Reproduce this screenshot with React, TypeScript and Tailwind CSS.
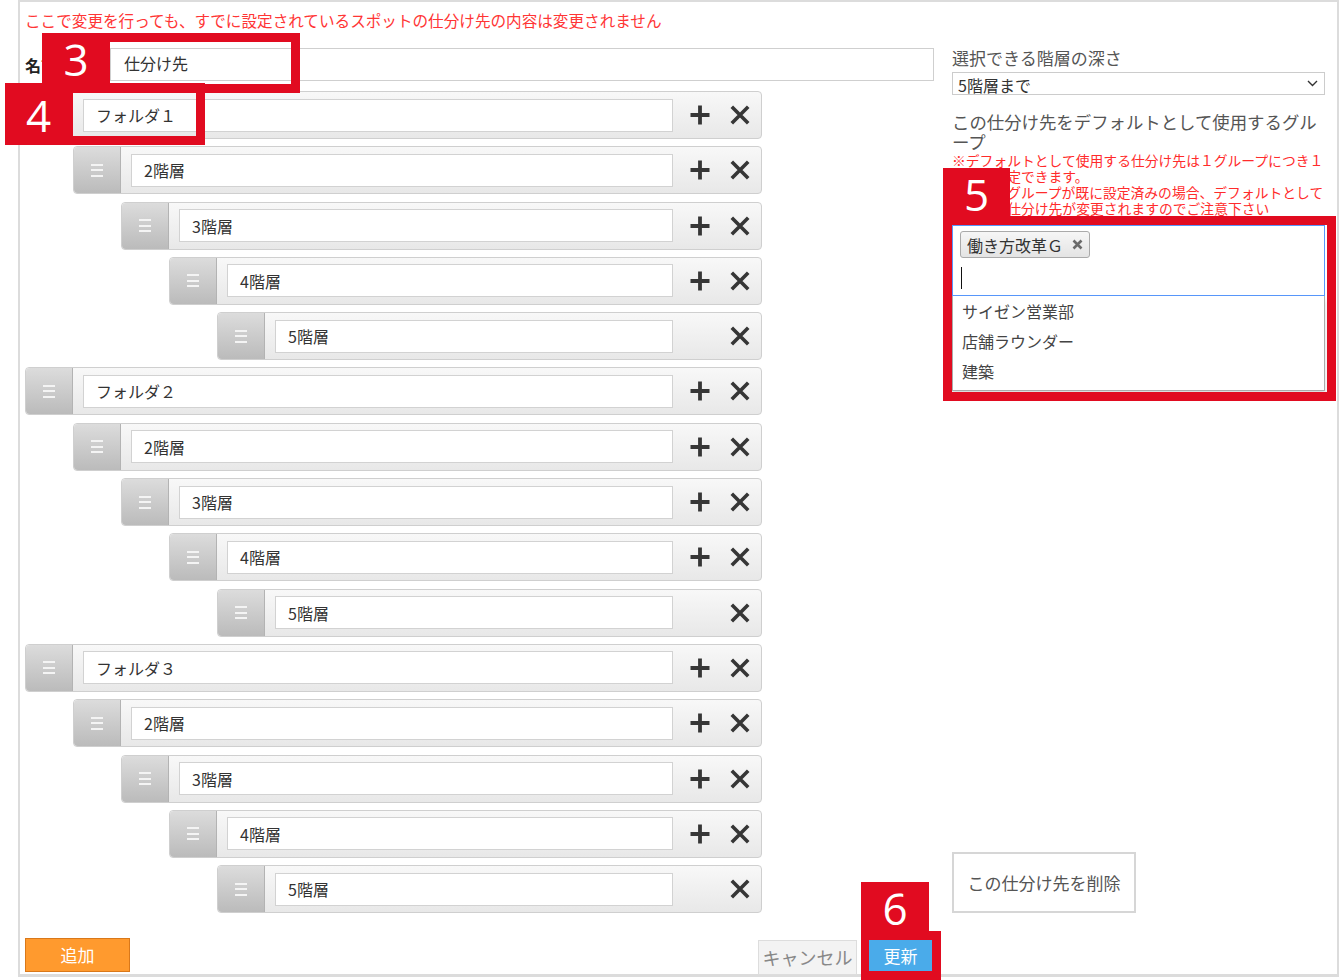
import React from "react";

type Row = { level: number; label: string };

const indent: Record<number, string> = {
  1: "ml-0",
  2: "ml-[48px]",
  3: "ml-[96px]",
  4: "ml-[144px]",
  5: "ml-[192px]",
};

const rows: Row[] = ["１", "２", "３"].flatMap((n) => [
  { level: 1, label: `フォルダ${n}` },
  { level: 2, label: "2階層" },
  { level: 3, label: "3階層" },
  { level: 4, label: "4階層" },
  { level: 5, label: "5階層" },
]);

const PlusIcon = () => (
  <svg width="22" height="22" viewBox="0 0 22 22">
    <path d="M11 1.5v19M1.5 11h19" stroke="#363636" strokeWidth="3.8" fill="none" />
  </svg>
);

const CrossIcon = () => (
  <svg width="20" height="20" viewBox="0 0 20 20">
    <path d="M1.8 1.8l16.4 16.4M18.2 1.8L1.8 18.2" stroke="#363636" strokeWidth="3.6" fill="none" />
  </svg>
);

const FolderRow: React.FC<Row> = ({ level, label }) => (
  <div
    className={`${indent[level]} flex h-[48px] rounded-[4px] border border-[#cfcfcf] bg-gradient-to-b from-[#f8f8f8] to-[#e8e8e8]`}
  >
    <div className="flex w-[47px] flex-col items-center justify-center gap-[3.5px] rounded-l-[4px] border-r border-[#b3b3b3] bg-gradient-to-b from-[#dcdcdc] to-[#bbbbbb]">
      <span className="h-[2px] w-[12px] bg-[#f4f4f4]" />
      <span className="h-[2px] w-[12px] bg-[#f4f4f4]" />
      <span className="h-[2px] w-[12px] bg-[#f4f4f4]" />
    </div>
    <div className="flex flex-1 items-center pl-[10px]">
      <div className="flex h-[33px] w-full items-center border border-[#d2d2d2] bg-white pl-[12px] text-[16px] text-[#333]">
        {label}
      </div>
    </div>
    <div className="flex w-[88px] items-center gap-[19px] pl-[16px]">
      <span className={level === 5 ? "invisible" : ""}>
        <PlusIcon />
      </span>
      <CrossIcon />
    </div>
  </div>
);

const Badge: React.FC<{ n: string; className: string }> = ({ n, className }) => (
  <div
    className={`absolute flex justify-center bg-[#e10b20] pt-[2px] font-['Open_Sans',sans-serif] text-[44px] leading-[48px] text-white ${className}`}
  >
    {n}
  </div>
);

export default function App() {
  return (
    <div className="relative h-[980px] w-[1340px] overflow-hidden bg-white font-['Noto_Sans_CJK_JP',sans-serif]">
      <div className="ml-[18px] h-[977px] w-[1321px] border-x-2 border-t-2 border-b-[3px] border-[#dcdcdc] px-[5px] pt-[8px]">
        <p className="h-[20px] text-[15.6px] leading-[20px] text-[#ff3535]">
          ここで変更を行っても、すでに設定されているスポットの仕分け先の内容は変更されません
        </p>

        <div className="mt-[18px] flex">
          {/* left: name + folders */}
          <div className="w-[909px]">
            <div className="flex h-[33px] items-center">
              <span className="w-[85px] text-[16px] font-bold text-[#222]">名前</span>
              <div className="flex h-full flex-1 items-center border border-[#cfcfcf] pb-[3px] pl-[13px] text-[16px] text-[#333]">
                仕分け先
              </div>
            </div>
            <div className="mt-[10px] flex w-[737px] flex-col gap-[7.3px]">
              {rows.map((r, i) => (
                <FolderRow key={i} level={r.level} label={r.label} />
              ))}
            </div>
          </div>

          {/* right: settings */}
          <div className="ml-[18px] flex w-[373px] flex-col">
            <p className="text-[17px] leading-[20px] text-[#555]">選択できる階層の深さ</p>
            <div className="mt-[4px] flex h-[23px] items-center justify-between border border-[#cccccc] pl-[5px] pr-[6px] text-[16px] text-[#333]">
              <span className="pt-[3px]">5階層まで</span>
              <svg width="11" height="7" viewBox="0 0 11 7">
                <path d="M1 1l4.5 4.5L10 1" stroke="#333" strokeWidth="1.4" fill="none" />
              </svg>
            </div>
            <p className="mt-[17px] text-[17.4px] leading-[20px] text-[#555]">
              この仕分け先をデフォルトとして使用するグループ
            </p>
            <div className="whitespace-nowrap text-[13.8px] leading-[16px] text-[#ff2b2b]">
              <p>※デフォルトとして使用する仕分け先は１グループにつき１</p>
              <p>つまで設定できます。</p>
              <p>なお他のグループが既に設定済みの場合、デフォルトとして</p>
              <p>設定した仕分け先が変更されますのでご注意下さい</p>
            </div>

            <div className="mt-[9px]">
              <div className="h-[71px] border border-[#5897fb] px-[7px] pt-[5px]">
                <div className="inline-flex h-[27px] items-center gap-[9px] rounded-[3px] border border-[#aaaaaa] bg-gradient-to-b from-[#f6f6f6] to-[#e4e4e4] pl-[6px] pr-[6px] text-[16px] text-[#333]">
                  働き方改革Ｇ
                  <svg width="11" height="11" viewBox="0 0 11 11">
                    <path d="M1.5 1.5l8 8M9.5 1.5l-8 8" stroke="#6a6a6a" strokeWidth="2.6" fill="none" />
                  </svg>
                </div>
                <div className="ml-[1px] mt-[9px] h-[22px] w-px bg-[#111]" />
              </div>
              <div className="border border-t-0 border-[#aaaaaa] pb-[4px] shadow-[0_4px_5px_rgba(0,0,0,0.15)]">
                <div className="h-[30px] pl-[9px] text-[16px] leading-[30px] text-[#444]">サイゼン営業部</div>
                <div className="h-[30px] pl-[9px] text-[16px] leading-[30px] text-[#444]">店舗ラウンダー</div>
                <div className="h-[30px] pl-[9px] text-[16px] leading-[30px] text-[#444]">建築</div>
              </div>
            </div>

            <button className="mt-auto h-[61px] w-[184px] border-2 border-[#d6d6d6] bg-white text-[17px] text-[#555]">
              この仕分け先を削除
            </button>
          </div>
        </div>

        {/* footer */}
        <div className="mt-[25px] flex w-[909px] items-start justify-between">
          <button className="h-[34px] w-[105px] border border-[#d9781a] bg-[#ff9a2e] text-[17px] text-white">
            追加
          </button>
          <div className="mr-[2px] mt-[2px] flex items-start gap-[12px]">
            <button className="h-[35px] w-[99px] border border-[#dddddd] bg-[#f3f3f3] text-[18px] text-[#888]">
              キャンセル
            </button>
            <button className="h-[31px] w-[63px] bg-[#4aabea] text-[17px] text-white">更新</button>
          </div>
        </div>
      </div>

      {/* annotation badges */}
      <Badge n="3" className="left-[42px] top-[33px] h-[60px] w-[68px]" />
      <div className="absolute left-[101px] top-[33px] h-[60px] w-[199px] border-[9px] border-[#e10b20]" />

      <Badge n="4" className="left-[5px] top-[83px] h-[62px] w-[67px] pt-[8px]" />
      <div className="absolute left-[64px] top-[83px] h-[62px] w-[141px] border-[9px] border-[#e10b20]" />

      <Badge n="5" className="left-[943px] top-[168px] h-[50px] w-[67px]" />
      <div className="absolute left-[943px] top-[216px] h-[185px] w-[393px] border-[9px] border-[#e10b20]" />

      <Badge n="6" className="left-[861px] top-[882px] h-[50px] w-[68px]" />
      <div className="absolute left-[861px] top-[931px] h-[49px] w-[80px] border-[9px] border-l-[8px] border-[#e10b20]" />
    </div>
  );
}
